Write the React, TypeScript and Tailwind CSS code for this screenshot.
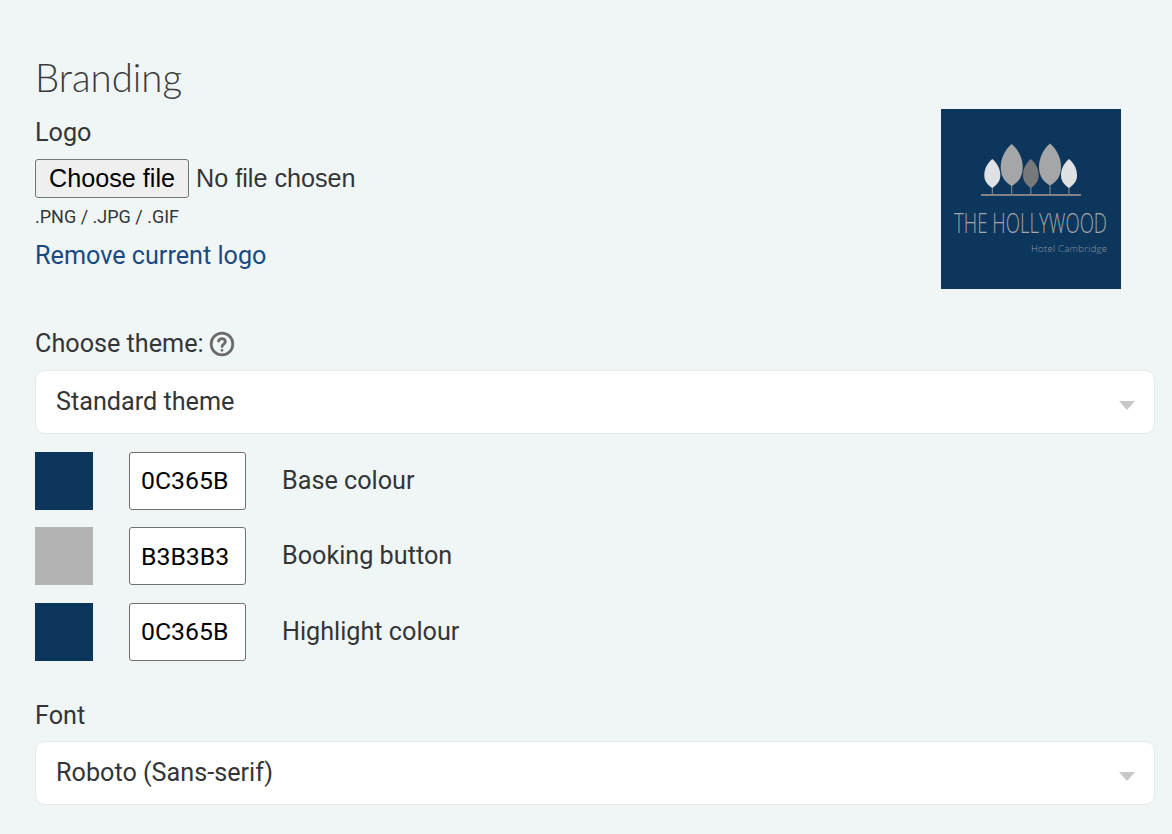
const roboto = "font-['Roboto',sans-serif]";

function Leaf({ x0, x1, top, bottom, fill }: { x0: number; x1: number; top: number; bottom: number; fill: string }) {
  const cx = (x0 + x1) / 2;
  const r = (x1 - x0) / 2;
  const h = bottom - top;
  return (
    <g>
      <line x1={cx} y1={bottom - 2} x2={cx} y2={85} stroke="#8c8f94" strokeWidth="1" />
      <path
        d={`M${cx} ${top} C${cx + r * 0.7} ${top + h * 0.16} ${cx + r} ${top + h * 0.36} ${cx + r} ${top + h * 0.56} C${cx + r} ${top + h * 0.8} ${cx + r * 0.5} ${bottom - 3} ${cx} ${bottom} C${cx - r * 0.5} ${bottom - 3} ${cx - r} ${top + h * 0.8} ${cx - r} ${top + h * 0.56} C${cx - r} ${top + h * 0.36} ${cx - r * 0.7} ${top + h * 0.16} ${cx} ${top}Z`}
        fill={fill}
      />
    </g>
  );
}

function Logo() {
  return (
    <svg width="180" height="180" viewBox="0 0 180 180" className="block shrink-0 mr-[34px]">
      <rect width="180" height="180" fill="#0c365b" />
      <Leaf x0={43.3} x1={59.3} top={50} bottom={79} fill="#dfe1e4" />
      <Leaf x0={59.7} x1={81.7} top={35} bottom={77} fill="#a5a6a8" />
      <Leaf x0={82} x1={97.7} top={50} bottom={79} fill="#77787a" />
      <Leaf x0={98} x1={120} top={34.5} bottom={76.5} fill="#a5a6a8" />
      <Leaf x0={120} x1={136} top={50} bottom={79} fill="#dfe1e4" />
      <rect x="40" y="85" width="100" height="2" fill="#808285" />
      <text transform="translate(13 124) scale(1 1.4)" textLength="153" lengthAdjust="spacingAndGlyphs" fontFamily="'Open Sans', sans-serif" fontWeight="300" fontSize="20" fill="#a3a6aa">
        THE HOLLYWOOD
      </text>
      <text x="90" y="143" textLength="76" lengthAdjust="spacing" fontFamily="'Open Sans', sans-serif" fontWeight="300" fontSize="9.5" fill="#8f99a7">
        Hotel Cambridge
      </text>
    </svg>
  );
}

function SelectBox({ value }: { value: string }) {
  return (
    <div className="h-[64px] bg-white border border-[#e6e9ea] rounded-[10px] flex items-center justify-between pl-[20px] pr-[19px] text-[25.2px] text-[#333537]">
      <span>{value}</span>
      <span className="w-0 h-0 border-l-[8.5px] border-r-[8.5px] border-t-[9px] border-l-transparent border-r-transparent border-t-[#c8c8c8] mt-[7px]" />
    </div>
  );
}

function ColourRow({ colour, code, label }: { colour: string; code: string; label: string }) {
  return (
    <div className="flex items-center h-[58px]">
      <div className="w-[58px] h-[58px]" style={{ backgroundColor: colour }} />
      <div className="ml-[36px] w-[117px] h-[58px] bg-white border border-[#6f6f6f] rounded-[3px] flex items-center pl-[11px] text-[24.8px] text-black">
        {code}
      </div>
      <div className="ml-[36px] text-[25.2px] text-[#333537]">{label}</div>
    </div>
  );
}

export default function App() {
  return (
    <div className={`w-[1172px] h-[834px] overflow-hidden bg-[#f0f5f6] pl-[35px] pr-[17px] pt-[54px] ${roboto}`}>
      <h1 className="font-['Lato',sans-serif] font-light text-[38.4px] leading-[46px] text-[#3a3c3e]">Branding</h1>

      <div className="flex justify-between items-start mt-[9px] h-[180px]">
        <div>
          <div className="text-[25.2px] leading-[28px] text-[#333537] mt-[10px]">Logo</div>
          <div className="flex items-center mt-[12px] h-[39px]">
            <div className="w-[154px] h-[39px] flex items-center justify-center bg-[#efefef] border border-[#767676] rounded-[3px] font-['Liberation_Sans',sans-serif] text-[25.2px] text-black">
              Choose file
            </div>
            <span className="ml-[7px] text-[25.2px] font-['Liberation_Sans',sans-serif] text-[#333537]">No file chosen</span>
          </div>
          <div className="mt-[8px] text-[18px] leading-[21px] text-[#333537]">.PNG / .JPG / .GIF</div>
          <div className="mt-[15px] text-[25.2px] leading-[28px] text-[#1b4a80]">Remove current logo</div>
        </div>
        <Logo />
      </div>

      <div className="flex items-center mt-[41px] h-[28px] text-[25.2px] text-[#333537]">
        <span>Choose theme:</span>
        <svg width="26" height="26" viewBox="0 0 24 24" className="ml-[5px] -mt-[1px]" fill="none" stroke="#6b6b6b" strokeWidth="2.6">
          <circle cx="12" cy="12" r="10" />
          <path d="M8.8 9.4a3.2 3.2 0 0 1 6.3.6c0 2-3 2.4-3 4.4" strokeLinecap="round" />
          <circle cx="12" cy="17.8" r="0.7" fill="#6b6b6b" strokeWidth="1.2" />
        </svg>
      </div>

      <div className="mt-[12px]">
        <SelectBox value="Standard theme" />
      </div>

      <div className="mt-[18px] flex flex-col gap-[17.4px]">
        <ColourRow colour="#0c365b" code="0C365B" label="Base colour" />
        <ColourRow colour="#b3b3b3" code="B3B3B3" label="Booking button" />
        <ColourRow colour="#0c365b" code="0C365B" label="Highlight colour" />
      </div>

      <div className="mt-[41px] text-[25.2px] leading-[28px] text-[#333537]">Font</div>
      <div className="mt-[11px]">
        <SelectBox value="Roboto (Sans-serif)" />
      </div>
    </div>
  );
}
